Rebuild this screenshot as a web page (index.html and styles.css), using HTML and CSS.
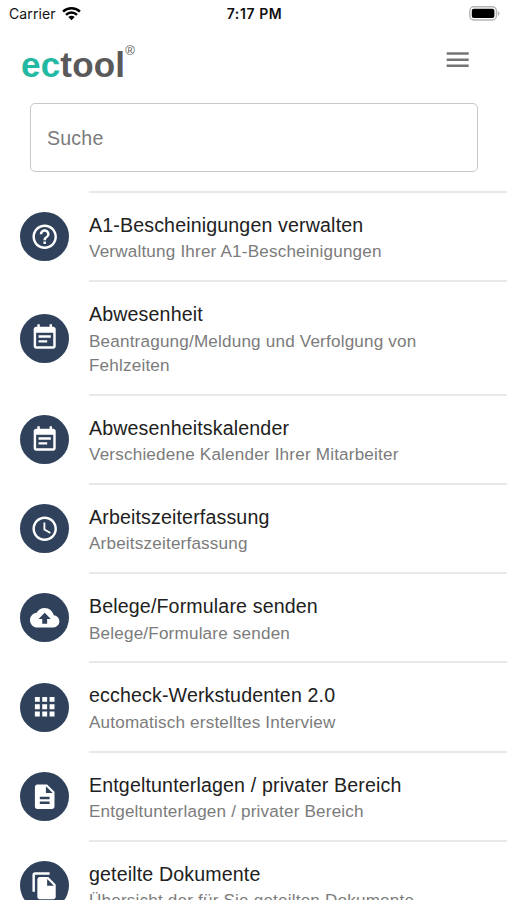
FILE: index.html
```html
<!DOCTYPE html>
<html lang="de">
<head>
    <meta charset="UTF-8">
    <meta name="viewport" content="width=device-width, initial-scale=1.0">
    <title>ectool</title>
    <link rel="stylesheet" href="styles.css">
</head>
<body>
    <div class="statusbar">
        <div class="carrier">
            <span>Carrier</span>
            <svg class="wifi" viewBox="0 0 18 14">
                <path d="M1 5.2a11.5 11.5 0 0 1 16 0M3.8 8.2a7.5 7.5 0 0 1 10.4 0" fill="none" stroke="#000" stroke-width="2.3"/>
                <path d="M9 13.5l-3-3.1a4.3 4.3 0 0 1 6 0z"/>
            </svg>
        </div>
        <div class="time">7:17 PM</div>
        <div class="power">
            <svg class="battery" viewBox="0 0 31 15">
                <rect x="0.8" y="0.8" width="26.6" height="13.2" rx="4" fill="#fff" stroke="#b5b5b5" stroke-width="1.4"/>
                <rect x="2.8" y="2.8" width="22.6" height="9.2" rx="2"/>
                <path d="M28.8 5v4.8c2.2-.8 2.2-4 0-4.8z" fill="#b5b5b5"/>
            </svg>
        </div>
    </div>

    <header class="header">
        <div class="logo"><span class="logo-ec">ec</span>tool<sup>®</sup></div>
        <button class="menu-btn" aria-label="Menü">
            <svg class="icon" viewBox="0 0 24 24"><path d="M3 18h18v-2H3v2zm0-5h18v-2H3v2zm0-7v2h18V6H3z"/></svg>
        </button>
    </header>

    <div class="search">
        <input type="text" placeholder="Suche">
    </div>

    <ul class="list">
        <li class="item">
            <div class="avatar">
                <svg class="icon" viewBox="0 0 24 24"><path d="M11 18h2v-2h-2v2zm1-16C6.48 2 2 6.48 2 12s4.48 10 10 10 10-4.48 10-10S17.52 2 12 2zm0 18c-4.41 0-8-3.59-8-8s3.59-8 8-8 8 3.59 8 8-3.59 8-8 8zm0-14c-2.21 0-4 1.79-4 4h2c0-1.1.9-2 2-2s2 .9 2 2c0 2-3 1.75-3 5h2c0-2.25 3-2.5 3-5 0-2.21-1.79-4-4-4z"/></svg>
            </div>
            <div class="item-text">
                <div class="title">A1-Bescheinigungen verwalten</div>
                <div class="subtitle">Verwaltung Ihrer A1-Bescheinigungen</div>
            </div>
        </li>
        <li class="item">
            <div class="avatar">
                <svg class="icon" viewBox="0 0 24 24"><path d="M17 10H7v2h10v-2zm2-7h-1V1h-2v2H8V1H6v2H5c-1.11 0-1.99.9-1.99 2L3 19c0 1.1.89 2 2 2h14c1.1 0 2-.9 2-2V5c0-1.1-.9-2-2-2zm0 16H5V8h14v11zm-5-5H7v2h7v-2z"/></svg>
            </div>
            <div class="item-text">
                <div class="title">Abwesenheit</div>
                <div class="subtitle">Beantragung/Meldung und Verfolgung von Fehlzeiten</div>
            </div>
        </li>
        <li class="item">
            <div class="avatar">
                <svg class="icon" viewBox="0 0 24 24"><path d="M17 10H7v2h10v-2zm2-7h-1V1h-2v2H8V1H6v2H5c-1.11 0-1.99.9-1.99 2L3 19c0 1.1.89 2 2 2h14c1.1 0 2-.9 2-2V5c0-1.1-.9-2-2-2zm0 16H5V8h14v11zm-5-5H7v2h7v-2z"/></svg>
            </div>
            <div class="item-text">
                <div class="title">Abwesenheitskalender</div>
                <div class="subtitle">Verschiedene Kalender Ihrer Mitarbeiter</div>
            </div>
        </li>
        <li class="item">
            <div class="avatar">
                <svg class="icon" viewBox="0 0 24 24"><path d="M11.99 2C6.47 2 2 6.48 2 12s4.47 10 9.99 10C17.52 22 22 17.52 22 12S17.52 2 11.99 2zM12 20c-4.42 0-8-3.58-8-8s3.58-8 8-8 8 3.58 8 8-3.58 8-8 8zm.5-13H11v6l5.25 3.15.75-1.23-4.5-2.67z"/></svg>
            </div>
            <div class="item-text">
                <div class="title">Arbeitszeiterfassung</div>
                <div class="subtitle">Arbeitszeiterfassung</div>
            </div>
        </li>
        <li class="item">
            <div class="avatar">
                <svg class="icon" viewBox="0 0 24 24"><path d="M19.35 10.04C18.67 6.59 15.64 4 12 4 9.11 4 6.6 5.64 5.35 8.04 2.34 8.36 0 10.91 0 14c0 3.31 2.69 6 6 6h13c2.76 0 5-2.24 5-5 0-2.64-2.05-4.78-4.65-4.96zM14 13v4h-4v-4H7l5-5 5 5h-3z"/></svg>
            </div>
            <div class="item-text">
                <div class="title">Belege/Formulare senden</div>
                <div class="subtitle">Belege/Formulare senden</div>
            </div>
        </li>
        <li class="item">
            <div class="avatar">
                <svg class="icon" viewBox="0 0 24 24"><path d="M4 8h4V4H4v4zm6 12h4v-4h-4v4zm-6 0h4v-4H4v4zm0-6h4v-4H4v4zm6 0h4v-4h-4v4zm6-10v4h4V4h-4zm-6 4h4V4h-4v4zm6 6h4v-4h-4v4zm0 6h4v-4h-4v4z"/></svg>
            </div>
            <div class="item-text">
                <div class="title">eccheck-Werkstudenten 2.0</div>
                <div class="subtitle">Automatisch erstelltes Interview</div>
            </div>
        </li>
        <li class="item">
            <div class="avatar">
                <svg class="icon" viewBox="0 0 24 24"><path d="M14 2H6c-1.1 0-1.99.9-1.99 2L4 20c0 1.1.89 2 1.99 2H18c1.1 0 2-.9 2-2V8l-6-6zm2 16H8v-2h8v2zm0-4H8v-2h8v2zm-3-5V3.5L18.5 9H13z"/></svg>
            </div>
            <div class="item-text">
                <div class="title">Entgeltunterlagen / privater Bereich</div>
                <div class="subtitle">Entgeltunterlagen / privater Bereich</div>
            </div>
        </li>
        <li class="item">
            <div class="avatar">
                <svg class="icon" viewBox="0 0 24 24"><path d="M16 1H4c-1.1 0-2 .9-2 2v14h2V3h12V1zm-1 4l6 6v10c0 1.1-.9 2-2 2H7.99C6.89 23 6 22.1 6 21l.01-14c0-1.1.89-2 1.99-2h7zm-1 7h5.5L14 6.5V12z"/></svg>
            </div>
            <div class="item-text">
                <div class="title">geteilte Dokumente</div>
                <div class="subtitle">Übersicht der für Sie geteilten Dokumente</div>
            </div>
        </li>
    </ul>
</body>
</html>
```

FILE: styles.css
```css
* {
    margin: 0;
    padding: 0;
    box-sizing: border-box;
}

body {
    height: 900px;
    overflow: hidden;
    background: #fff;
    color: #212121;
    font-family: "Liberation Sans", Helvetica, Arial, sans-serif;
}

.icon {
    display: block;
    width: 29.4px;
    height: 29.4px;
    fill: currentColor;
}

/* status bar */
.statusbar {
    display: grid;
    grid-template-columns: 1fr auto 1fr;
    align-items: center;
    height: 28px;
    padding: 0 7px 2px 9px;
    color: #111;
    font-family: Inter, sans-serif;
    font-size: 14px;
}

.carrier {
    display: flex;
    align-items: center;
    gap: 6px;
    letter-spacing: 0.1px;
}

.wifi {
    width: 19px;
    height: 15px;
}

.time {
    font-weight: 600;
    letter-spacing: 0.6px;
}

.power {
    display: flex;
    justify-content: flex-end;
}

.battery {
    width: 31px;
    height: 15px;
}

/* header */
.header {
    display: flex;
    align-items: center;
    justify-content: space-between;
    height: 75px;
    padding: 0 35px 0 21px;
}

.logo {
    display: flex;
    margin-bottom: 2px;
    color: #595959;
    font-size: 35px;
    font-weight: bold;
    line-height: 40px;
    letter-spacing: 0.2px;
}

.logo-ec {
    color: #22b8a2;
}

.logo sup {
    font-size: 13px;
    font-weight: normal;
    line-height: 12px;
}

.menu-btn {
    margin-bottom: 12px;
    border: none;
    background: none;
    color: #757575;
}

/* search */
.search {
    padding: 0 29px 0 30px;
}

.search input {
    display: block;
    width: 100%;
    height: 69px;
    padding: 2px 16px 0;
    border: 1.5px solid #c8c8c8;
    border-radius: 5px;
    font-family: inherit;
    font-size: 19.6px;
    letter-spacing: 0.18px;
}

.search input::placeholder {
    color: #7b7b7b;
    opacity: 1;
}

/* list */
.list {
    padding-top: 19px;
    list-style: none;
}

.item {
    display: flex;
    align-items: center;
    padding-left: 20.4px;
}

.avatar {
    display: flex;
    align-items: center;
    justify-content: center;
    width: 49px;
    height: 49px;
    margin-top: 2px;
    margin-right: 19.6px;
    border-radius: 50%;
    background: #2f415b;
    color: #fff;
}

.item-text {
    flex: 1;
    padding: 18px 60px 15.4px 0;
    border-top: 2px solid #e8e8e8;
}

.title {
    font-size: 19.6px;
    line-height: 29.4px;
    letter-spacing: 0.15px;
}

.subtitle {
    color: #7b7b7b;
    font-size: 17.1px;
    line-height: 24.4px;
    letter-spacing: 0.19px;
}
```
